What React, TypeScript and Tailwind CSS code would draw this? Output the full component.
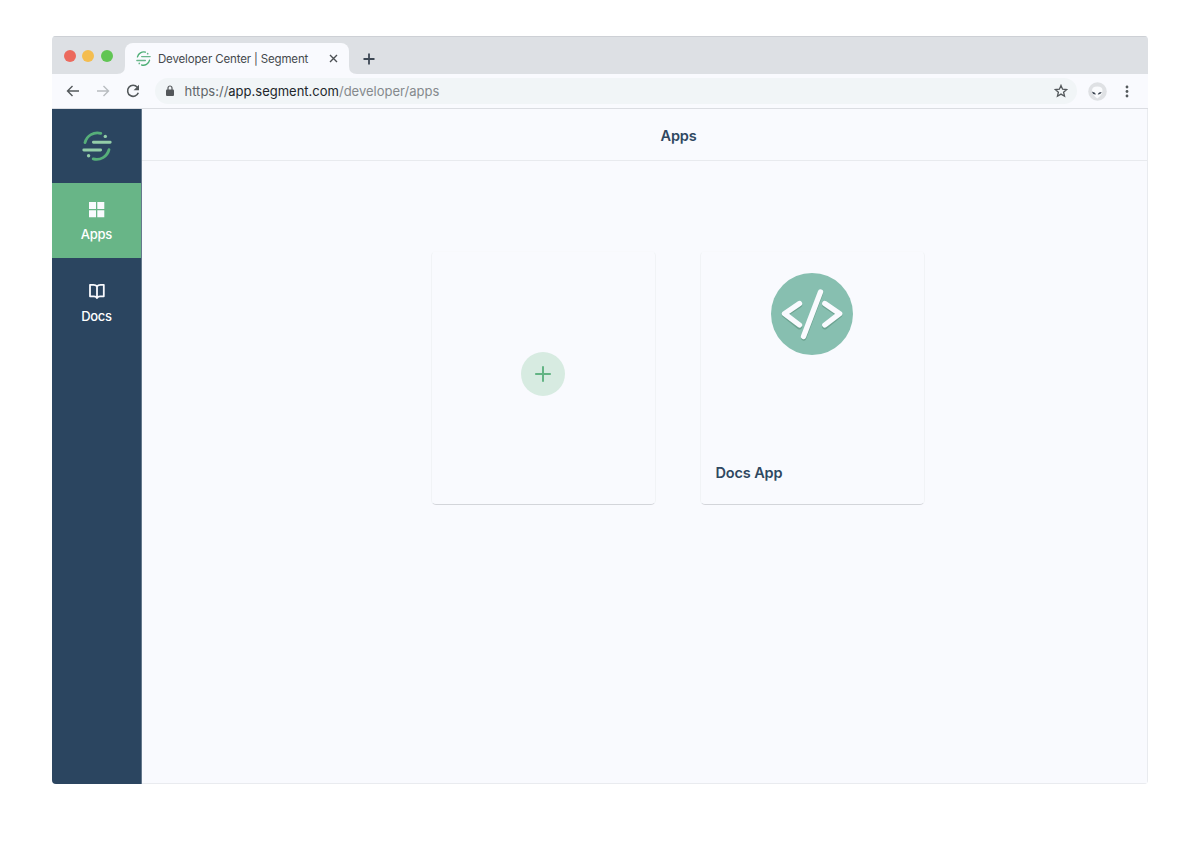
import type { ReactNode } from "react";

function SegmentMark({ className, light, dark }: { className: string; light: string; dark: string }) {
  return (
    <svg className={className} viewBox="0 0 30 30" fill="none" strokeLinecap="round">
      <path d="M3 11.600A12.800 12.800 0 0 1 18.800 2.300" stroke={dark} strokeWidth="2.800" />
      <path d="M27 18.600A12.800 12.800 0 0 1 11.200 27.900" stroke={dark} strokeWidth="2.800" />
      <path d="M11.400 11.200H28.200M1.800 19H18.600" stroke={light} strokeWidth="2.900" />
      <circle cx="23.300" cy="5.400" r="1.700" fill={light} />
      <circle cx="6.600" cy="24.800" r="1.700" fill={light} />
    </svg>
  );
}

function TabStrip() {
  return (
    <div className="flex h-[38px] shrink-0 border-t border-[#cdd0d5] bg-[#dde0e4] pt-[6px]">
      <div className="ml-[11.500px] mt-[6.500px] flex gap-[6.700px]">
        <span className="size-3 rounded-full bg-[#ec6a5e]" />
        <span className="size-3 rounded-full bg-[#f4bd50]" />
        <span className="size-3 rounded-full bg-[#61c554]" />
      </div>
      <svg className="ml-[4.100px] h-[31px] w-[8px] shrink-0" viewBox="0 0 8 31">
        <path d="M8 0V23Q8 31 0 31H8Z" fill="#f9fafe" />
      </svg>
      <div className="flex h-[31px] w-[224px] shrink-0 items-center rounded-t-[8px] bg-[#f9fafe] pl-[11px]">
        <SegmentMark className="size-[15px] shrink-0" light="#68b68a" dark="#4faf77" />
        <span className="ml-[7px] w-[151px] whitespace-nowrap text-[11.500px] leading-4 tracking-[-0.013em] text-[#45494d]">
          Developer Center | Segment
        </span>
        <svg className="ml-[20px] size-[9px] shrink-0" viewBox="0 0 9 9">
          <path d="M1 1l7 7M8 1L1 8" stroke="#4c5054" strokeWidth="1.400" />
        </svg>
      </div>
      <svg className="h-[31px] w-[8px] shrink-0" viewBox="0 0 8 31">
        <path d="M0 0V23Q0 31 8 31H0Z" fill="#f9fafe" />
      </svg>
      <svg className="ml-[6px] mt-[10px] size-[12px]" viewBox="0 0 12 12">
        <path d="M6 .5v11M.5 6h11" stroke="#3d4854" strokeWidth="1.800" />
      </svg>
    </div>
  );
}

function Toolbar() {
  return (
    <div className="flex h-[35px] shrink-0 items-center border-b border-[#dbdde2] bg-[#f9fafe] pl-[14px]">
      <svg className="h-[14px] w-[14px]" viewBox="0 0 14 14" fill="none" stroke="#54595c" strokeWidth="1.400">
        <path d="M13 7H1.500M6.500 2L1.500 7 6.500 12" />
      </svg>
      <svg className="ml-[15.500px] h-[14px] w-[14px]" viewBox="0 0 14 14" fill="none" stroke="#b8bcc0" strokeWidth="1.400">
        <path d="M1 7h11.500M7.500 2L12.500 7 7.500 12" />
      </svg>
      <svg className="ml-[16px] h-[14px] w-[14px]" viewBox="0 0 14 14" fill="none">
        <path d="M11.300 3.200A5.500 5.500 0 1 0 12.300 8.700" stroke="#54595c" strokeWidth="1.600" />
        <path d="M13 .8V6.200H7.600Z" fill="#54595c" />
      </svg>
      <div className="ml-[15.500px] flex h-[26px] w-[922px] items-center rounded-full bg-[#f1f5f7] pl-[10.500px] pr-[9.500px]">
        <svg className="h-[12px] w-[8px]" viewBox="0 0 8 12">
          <path d="M2 5V3a2 2 0 0 1 4 0v2" fill="none" stroke="#53575a" strokeWidth="1.200" />
          <rect y="4.500" width="8" height="6.500" rx="1" fill="#53575a" />
        </svg>
        <div className="ml-[11px] whitespace-nowrap text-[13px] leading-5 text-[#858a8d]">
          <span className="text-[#606568]">https://</span>
          <span className="text-[#22272b]">app.segment.com</span>/developer/apps
        </div>
        <svg className="ml-auto size-[14px]" viewBox="0 0 14 14" fill="none" stroke="#54595c" strokeWidth="1.300">
          <path d="M7 1.400l1.600 3.800 4.100.35-3.100 2.700.95 4L7 10.100l-3.550 2.150.95-4-3.100-2.700 4.100-.35Z" />
        </svg>
      </div>
      <svg className="ml-[11px] size-[19px]" viewBox="0 0 19 19">
        <circle cx="9.500" cy="9.500" r="9.300" fill="#dfe1e4" />
        <path d="M4 8.500Q4 4.500 9.300 4.500T14.500 8.500Q14.500 12.500 9.300 16.500Q4 12.500 4 8.500Z" fill="#fafbfd" />
        <path d="M3.900 9.700Q6.900 9.500 8 12.300Q4.800 12.900 3.900 9.700ZM13.700 10Q10.900 9.800 9.600 12.300Q12.800 12.900 13.700 10Z" fill="#3d4652" />
      </svg>
      <svg className="ml-[18px] h-[13px] w-[4px]" viewBox="0 0 4 13" fill="#54595c">
        <circle cx="2" cy="2" r="1.400" />
        <circle cx="2" cy="6.500" r="1.400" />
        <circle cx="2" cy="11" r="1.400" />
      </svg>
    </div>
  );
}

function NavItem({ label, active, children }: { label: string; active?: boolean; children: ReactNode }) {
  return (
    <a className={`flex flex-col items-center text-white ${active ? "h-[75px] bg-[#68b587] pt-[18px]" : "h-[82px] pt-[25px]"}`}>
      {children}
      <span className="mt-[7px] text-[13px] font-medium leading-[18px] tracking-[-0.020em]">{label}</span>
    </a>
  );
}

function Sidebar() {
  return (
    <nav className="w-[90px] shrink-0 border-r border-[#65788c] bg-[#2b4560]">
      <div className="flex h-[74px] justify-center pt-[22px]">
        <SegmentMark className="size-[30px]" light="#93cda8" dark="#56ae79" />
      </div>
      <NavItem label="Apps" active>
        <svg className="size-[17px]" viewBox="0 0 17 17" fill="#f9fafe">
          <path d="M1 1h7v7H1zM9.300 1h7v7h-7zM1 9.300h7v7H1zM9.300 9.300h7v7h-7z" />
        </svg>
      </NavItem>
      <NavItem label="Docs">
        <svg className="size-[17px]" viewBox="0 0 17 17" fill="none" stroke="#f9fafe" strokeWidth="1.800" strokeLinejoin="round">
          <path d="M9 3.500Q7.900 1.800 5.500 1.800H2V13.300H6Q8.100 13.300 9 15Q9.900 13.300 12 13.300H15.800V1.800H12.500Q10.100 1.800 9 3.500ZM9 3.500V15" />
        </svg>
      </NavItem>
    </nav>
  );
}

function Card({ children }: { children: ReactNode }) {
  return (
    <div className="flex h-[254px] w-[225px] flex-col items-center rounded-[5px] border border-x-[#f1f3f6] border-t-[#f8f9fc] border-b-[#d3d5da] bg-[#f9fafe] pr-[1px]">
      {children}
    </div>
  );
}

export default function App() {
  return (
    <div className="h-[853px] w-[1200px] overflow-hidden bg-white px-[52px] pt-[36px] font-['Inter','Liberation_Sans',sans-serif]">
      <div className="flex h-[748px] flex-col overflow-hidden rounded-[4px] bg-[#f9fafe]">
        <TabStrip />
        <Toolbar />
        <div className="flex min-h-0 flex-1">
          <Sidebar />
          <main className="flex-1 border-r border-b border-[#e9ebef]">
            <header className="flex h-[52px] items-center border-b border-[#e8eaee] pl-[518.500px] pt-[2px]">
              <h1 className="text-[14.500px] font-semibold leading-5 tracking-[-0.010em] text-[#2f4861]">Apps</h1>
            </header>
            <div className="flex gap-[44px] pl-[289px] pt-[90px]">
              <Card>
                <div className="mt-[100px] flex size-[44px] items-center justify-center rounded-full bg-[#d7ebe1]">
                  <svg className="size-[16px]" viewBox="0 0 16 16">
                    <path d="M8 .2v15.600M.2 8h15.600" stroke="#63b484" strokeWidth="2" />
                  </svg>
                </div>
              </Card>
              <Card>
                <svg className="mt-[21px] size-[82px] shrink-0" viewBox="0 0 82 82" fill="none" strokeWidth="5.300" strokeLinecap="round" strokeLinejoin="round">
                  <circle cx="41" cy="41" r="41" fill="#87bfb0" />
                  <path d="M28.500 32L13.500 42L28.500 53.800M53.800 32L68.700 42L53.800 53.800M49.500 20.500L32.700 65" stroke="#6ca391" />
                  <path d="M28.500 30.500L13.500 40.700L28.500 52M53.800 30.500L68.700 40.700L53.800 52M49.500 19L32.500 63.500" stroke="#f9fafe" />
                </svg>
                <h2 className="mt-[108px] self-start pl-[14.500px] text-[14.500px] font-semibold leading-5 tracking-[-0.010em] text-[#2f4861]">Docs App</h2>
              </Card>
            </div>
          </main>
        </div>
      </div>
    </div>
  );
}
